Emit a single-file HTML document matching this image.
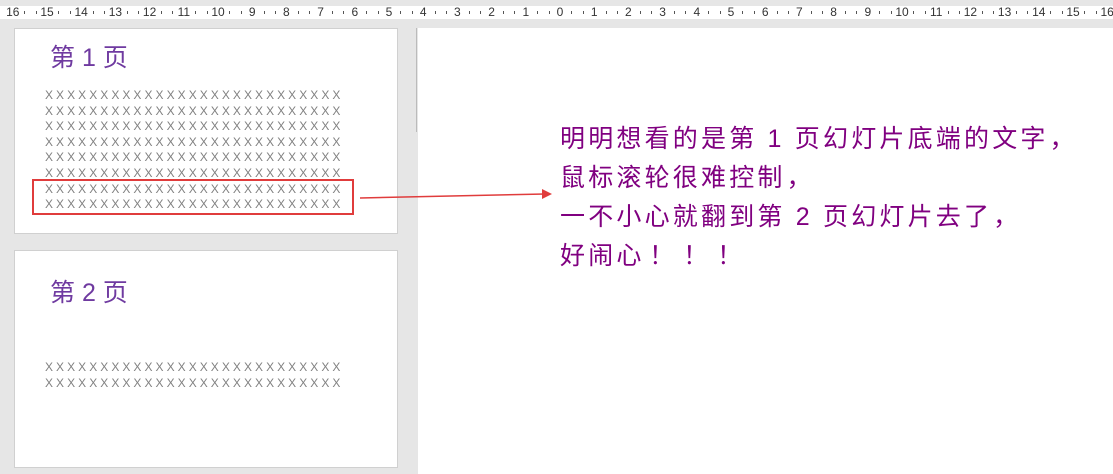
<!DOCTYPE html>
<html><head><meta charset="utf-8"><style>
body{margin:0;width:1113px;height:474px;background:#e6e6e6;position:relative;overflow:hidden;font-family:"Liberation Sans","Noto Sans CJK SC",sans-serif}
.ruler{position:absolute;left:0;top:6px;width:1113px;height:13px;background:#fff}
.ruler span{position:absolute;top:-1px;font-size:12px;color:#333;transform:translateX(-50%)}
.ruler i{position:absolute;top:5px;width:1px;height:3px;background:#555}
.slide{position:absolute;left:14px;width:382px;background:#fff;border:1px solid #d0d0d0}
.t{position:absolute;left:35px;font-size:25px;color:#6f3aa0;font-family:"Liberation Sans","WenQuanYi Zen Hei",sans-serif}
.x{position:absolute;left:30px;font-size:12px;line-height:15.6px;color:#808080;letter-spacing:3.05px;white-space:pre}
.main{position:absolute;left:418px;top:28px;right:0;bottom:0;background:#fff}
.txt{position:absolute;left:560px;top:120px;font-size:25px;line-height:39px;color:#800080;letter-spacing:3.2px;font-family:"WenQuanYi Zen Hei",sans-serif;white-space:nowrap}
.p{display:inline-block;width:30px;text-align:center}
.e{display:inline-block;width:34px;text-align:center;letter-spacing:0}
</style></head><body>
<div class="ruler" id="r"></div>
<div class="slide" style="top:28px;height:204px">
<div class="t" style="top:9px">第 1 页</div>
<div class="x" style="top:59px">XXXXXXXXXXXXXXXXXXXXXXXXXXX
XXXXXXXXXXXXXXXXXXXXXXXXXXX
XXXXXXXXXXXXXXXXXXXXXXXXXXX
XXXXXXXXXXXXXXXXXXXXXXXXXXX
XXXXXXXXXXXXXXXXXXXXXXXXXXX
XXXXXXXXXXXXXXXXXXXXXXXXXXX
XXXXXXXXXXXXXXXXXXXXXXXXXXX
XXXXXXXXXXXXXXXXXXXXXXXXXXX</div>
</div>
<div class="slide" style="top:250px;height:216px">
<div class="t" style="top:22px">第 2 页</div>
<div class="x" style="top:109px">XXXXXXXXXXXXXXXXXXXXXXXXXXX
XXXXXXXXXXXXXXXXXXXXXXXXXXX</div>
</div>
<div style="position:absolute;left:32px;top:179px;width:318px;height:32px;border:2px solid #e03c3c"></div>
<div class="main"></div>
<div style="position:absolute;left:416px;top:28px;width:1px;height:104px;background:#bbb"></div>
<svg style="position:absolute;left:0;top:0" width="1113" height="474"><line x1="360" y1="198" x2="545" y2="194" stroke="#e03c3c" stroke-width="1.5"/><polygon points="552,194 542,189 542,199" fill="#e03c3c"/></svg>
<div class="txt">明明想看的是第 1 页幻灯片底端的文字<span class="p">，</span><br>鼠标滚轮很难控制<span class="p">，</span><br>一不小心就翻到第 2 页幻灯片去了<span class="p">，</span><br>好闹心<span class="e">！</span><span class="e">！</span><span class="e">！</span></div>
<script>
var r=document.getElementById('r'),h='';
for(var n=-16;n<=16;n++){var x=560+n*34.2;h+='<span style="left:'+x+'px">'+Math.abs(n)+'</span>';if(n<16){h+='<i style="left:'+(x+11.4)+'px"></i><i style="left:'+(x+22.8)+'px"></i>';}}
r.innerHTML=h;
</script>
</body></html>
